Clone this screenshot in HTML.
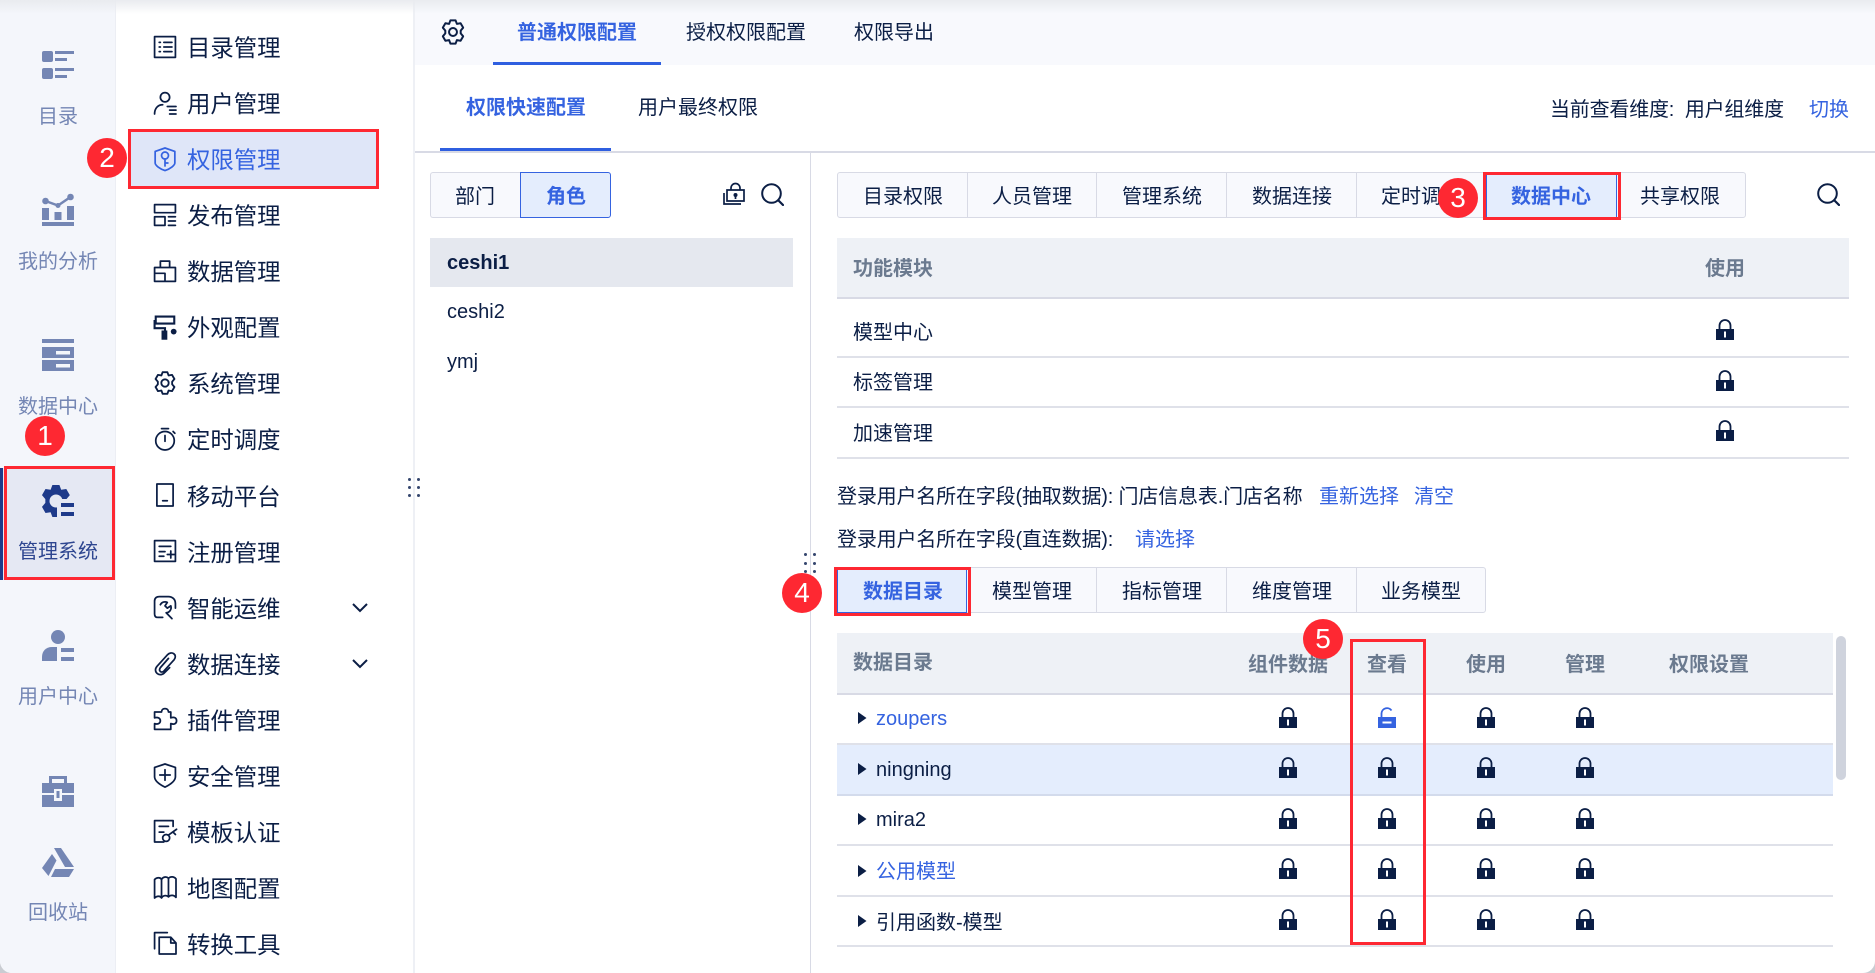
<!DOCTYPE html>
<html lang="zh"><head><meta charset="utf-8"><title>权限管理</title>
<style>
html,body{margin:0;padding:0;width:1875px;height:973px;overflow:hidden;background:#c9ccd2}
#app{position:relative;width:1875px;height:973px;overflow:hidden;background:#fff;border-radius:0 0 12px 12px;font-family:"Liberation Sans","Noto Sans CJK SC",sans-serif;font-size:20px;color:#0b1e45}
.a{position:absolute;box-sizing:border-box}
.t{position:absolute;white-space:nowrap;line-height:30px;height:30px;margin-top:1px}
.c{transform:translateX(-50%)}
.b{font-weight:700}
.bl{color:#3563e0}
.g{color:#6b7a8f;font-weight:700}
.r{color:#7486b4}
.m{font-size:23.4px;left:187px;line-height:36px;height:36px}
.red{position:absolute;box-sizing:border-box;border:3px solid #fe2832}
.n{position:absolute;width:40px;height:40px;border-radius:50%;background:#fe2832;color:#fff;font-size:28px;line-height:40px;text-align:center}
.ln{position:absolute;height:2px;background:#dfe1e9}
svg{position:absolute;overflow:visible}
.ic{fill:none;stroke:#0b1e45;stroke-width:1.5;stroke-linejoin:round;stroke-linecap:round}
.d{position:absolute;width:3px;height:3px;border-radius:50%;background:#34466e}
</style></head><body><div id="app">
<svg width="0" height="0" style="position:absolute">
<defs>
<symbol id="lock" viewBox="0 0 18 21"><path d="M3.500 11V6.500a5.500 5.500 0 0 1 11 0V11" fill="none" stroke="#0b1e45" stroke-width="1.800"/><rect x="0" y="10" width="18" height="11" fill="#0b1e45"/><rect x="8" y="12.500" width="2" height="6" fill="#fff"/></symbol>
<symbol id="search" viewBox="0 0 23 23"><circle cx="10.500" cy="10.500" r="9.300" fill="none" stroke="#0b1e45" stroke-width="2"/><path d="M17.500 17.500l4.500 4.500" stroke="#0b1e45" stroke-width="2.200" stroke-linecap="round"/></symbol>
<symbol id="gear" viewBox="0 0 24 24"><path d="M9.800 2h4.400l1.100 3 3.200-.5 2.200 3.800-2.100 2.500v2.400l2.100 2.500-2.200 3.800-3.200-.5-1.100 3H9.800l-1.100-3-3.200.5-2.200-3.800 2.100-2.500v-2.400L3.300 8.300l2.200-3.800 3.200.5z" fill="none" stroke="#0b1e45" stroke-width="1.700" stroke-linejoin="round"/><circle cx="12" cy="12" r="3.400" fill="none" stroke="#0b1e45" stroke-width="1.700"/></symbol>
</defs>
</svg>

<!-- left rail -->
<div class="a" style="left:0;top:0;width:116px;height:973px;background:#f4f6fb;border-right:1px solid #eceef4"></div>
<div class="a" style="left:0;top:468px;width:3px;height:112px;background:#1e3a8a"></div>
<div class="a" style="left:3px;top:468px;width:112px;height:112px;background:#e5e8f3"></div>

<svg style="left:42px;top:51px" width="32" height="28"><g fill="#7486b4"><rect width="11" height="11" rx="2"/><rect x="13" width="19" height="3"/><rect x="13" y="7" width="12" height="3"/><rect y="17" width="11" height="11" rx="2"/><rect x="13" y="17" width="19" height="3"/><rect x="13" y="24" width="12" height="3"/></g></svg>
<svg style="left:42px;top:194px" width="32" height="32"><g fill="#7486b4"><rect y="14" width="7" height="12"/><rect x="12.500" y="18" width="7" height="8"/><rect x="25" y="12" width="7" height="14"/><rect y="28" width="32" height="4"/><path d="M3.500 7L16 11.500 28.500 3" fill="none" stroke="#7486b4" stroke-width="2.500"/><circle cx="3.500" cy="7" r="3.300"/><circle cx="16" cy="11.500" r="2.500"/><circle cx="28.500" cy="3" r="3.300"/></g></svg>
<svg style="left:42px;top:339px" width="32" height="32"><g fill="#7486b4"><rect width="32" height="4"/><rect y="8" width="32" height="11"/><rect y="21" width="32" height="11"/></g><rect x="14" y="12" width="14" height="3.500" fill="#f4f6fb"/><rect x="14" y="25" width="14" height="3.500" fill="#f4f6fb"/></svg>
<svg style="left:42px;top:485px" width="32" height="32" viewBox="0 0 32 32"><path transform="translate(-5.300 -3.200) scale(1.600)" d="M9.800 2h4.400l1.100 3 3.200-.5 2.200 3.800-2.100 2.500v2.400l2.100 2.500-2.200 3.800-3.200-.5-1.100 3H9.800l-1.100-3-3.200.5-2.200-3.800 2.100-2.500v-2.400L3.300 8.300l2.200-3.800 3.200.5z" fill="#1e3a8a"/><circle cx="14" cy="16" r="6.500" fill="#e5e8f3"/><rect x="15" y="14" width="17" height="18" fill="#e5e8f3"/><rect x="19" y="18" width="13" height="4" fill="#1e3a8a"/><rect x="19" y="27" width="13" height="4" fill="#1e3a8a"/></svg>
<svg style="left:42px;top:630px" width="32" height="32"><g fill="#7486b4"><circle cx="16" cy="7" r="7"/><path d="M0 31v-4c0-6 4-10 10-10h5v14z"/><rect x="19" y="18" width="13" height="4"/><rect x="19" y="27" width="13" height="4"/></g></svg>
<svg style="left:42px;top:775px" width="32" height="32"><g fill="#7486b4"><path d="M7 9V1h18v8h-3V4H10v5z"/><rect y="8" width="32" height="10"/><rect y="20" width="32" height="12"/></g><rect x="12" y="14" width="8" height="12" fill="#f4f6fb"/><rect x="14.500" y="16" width="3" height="7" fill="#7486b4"/></svg>
<svg style="left:42px;top:848px" width="32" height="30"><g fill="#7486b4"><path d="M12 0h7l13 19h-9z"/><path d="M10 6l4.500 6.500L6.500 28 0 20z"/><path d="M13 21h19l-5 8H9z"/></g></svg>

<div class="t c r" style="left:58px;top:101px">目录</div>
<div class="t c r" style="left:58px;top:246px">我的分析</div>
<div class="t c r" style="left:58px;top:391px">数据中心</div>
<div class="t c" style="left:58px;top:536px;color:#2e4690">管理系统</div>
<div class="t c r" style="left:58px;top:681px">用户中心</div>
<div class="t c r" style="left:58px;top:897px">回收站</div>

<!-- menu -->
<div class="a" style="left:413px;top:0;width:2px;height:973px;background:#eef0f5"></div>
<div class="a" style="left:131px;top:132px;width:245px;height:54px;background:#dfe6f8"></div>

<svg class="ic" viewBox="1.500 1.500 19 19" style="left:154px;top:36px" width="22" height="22"><rect x="2" y="2" width="18" height="18"/><path d="M6 7h1M10 7h7M6 11h1M10 11h7M6 15h1M10 15h7"/></svg>
<svg class="ic" viewBox="1.500 1.500 19 19" style="left:154px;top:92px" width="22" height="22"><circle cx="11" cy="6" r="4"/><path d="M2 20.500c0-5 3-8 7-8M13 14h7.500M15 17.200h5.500M15 20.500h5.500"/></svg>
<svg class="ic" viewBox="1.500 1.500 19 19" style="left:154px;top:148px;stroke:#3563e0" width="22" height="22"><path d="M11 1.500l8.500 3v10c0 2-4 5-8.500 6.500-4.500-1.500-8.500-4.500-8.500-6.500v-10z"/><circle cx="11" cy="8" r="3"/><path d="M11 11v6M11 14.500h2.500"/></svg>
<svg class="ic" viewBox="1.500 1.500 19 19" style="left:154px;top:204px" width="22" height="22"><path d="M2 2h18v7H2zM2 12.500h9V20H2zM14 12.500h6M14 16.200h6M14 20h6"/></svg>
<svg class="ic" viewBox="1.500 1.500 19 19" style="left:154px;top:260px" width="22" height="22"><path d="M2 8h18v12H2zM7 8V2.500h8V8M2 13h9M11 13v7"/></svg>
<svg viewBox="1.500 1.500 19 19" style="left:154px;top:316px" width="22" height="22"><path d="M3 2h16v6H3zM2 5v7h9v3" fill="none" stroke="#0b1e45" stroke-width="1.800"/><rect x="8" y="14" width="5" height="8" fill="#0b1e45"/><circle cx="18.500" cy="15" r="2.500" fill="#0b1e45"/></svg>
<svg style="left:152px;top:370px" width="26" height="26" viewBox="0 0 24 24"><use href="#gear"/></svg>
<svg class="ic" viewBox="1.500 1.500 19 19" style="left:154px;top:428px" width="22" height="22"><circle cx="11" cy="12.500" r="8"/><path d="M11 8v5M8 2h6M18 4.500l1.500 1.500"/></svg>
<svg class="ic" viewBox="1.500 1.500 19 19" style="left:154px;top:484px" width="22" height="22"><rect x="4" y="1.500" width="14" height="19"/><path d="M9 16h4"/></svg>
<svg class="ic" viewBox="1.500 1.500 19 19" style="left:154px;top:540px" width="22" height="22"><rect x="2" y="2" width="18" height="18"/><path d="M6 7h10M6 11.500h5M6 15.500h4M13 14h6M16 11v6"/></svg>
<svg class="ic" viewBox="1.500 1.500 19 19" style="left:154px;top:596px" width="22" height="22"><path d="M9 20H5c-2 0-3-1-3-3V6c0-3 2-4 4-4h8c3 0 6 2 6 6v4"/><path d="M7 9a4.500 4.500 0 0 1 6-2l-2 3 2 2 3-2a4.500 4.500 0 0 1-4 6l5 5"/></svg>
<svg class="ic" viewBox="1.500 1.500 19 19" style="left:154px;top:652px" width="22" height="22"><path d="M14 7L7 15c-2 3 1 5 3 3L19 8c3-4-2-8-6-4L4 14c-4 5 3 10 7 5l4-4"/></svg>
<svg class="ic" viewBox="1.500 1.500 19 19" style="left:154px;top:708px" width="22" height="22"><path d="M8 5c0-4 6-4 6 0h2v5c3-1 5 0 5 2.500S19 16 16 15v5H2v-5c3 1 5-.5 5-2.500S5 9 2 10V5z"/></svg>
<svg class="ic" viewBox="1.500 1.500 19 19" style="left:154px;top:764px" width="22" height="22"><path d="M11 1.500l9 3v8c0 4-5 7-9 9-4-2-9-5-9-9v-8z"/><path d="M6.500 11h9M11 6.500v9"/></svg>
<svg class="ic" viewBox="1.500 1.500 19 19" style="left:154px;top:820px" width="22" height="22"><path d="M10 20.500H2V2h16v5M6 7h8M6 12h4"/><circle cx="12" cy="17" r="3"/><path d="M14 14.500l7-5M18 12l2 2"/></svg>
<svg class="ic" viewBox="1.500 1.500 19 19" style="left:154px;top:876px" width="22" height="22"><path d="M2 4.500c2-2 5-2 6 0v16c-1-2-4-2-6 0zM8 4.500c1-2 4-3 6-1v16c-2-2-5-1-6 1zM14 3.500c2-2 5-1.500 6.500.5v16c-1.500-2-4.500-2.500-6.500-.5z"/></svg>
<svg class="ic" viewBox="1.500 1.500 19 19" style="left:154px;top:932px" width="22" height="22"><path d="M2 16V2h11M6 20.500V6h10l4.500 5v9.500zM16 6v5h4.500"/></svg>

<div class="t m" style="top:29px">目录管理</div>
<div class="t m" style="top:85px">用户管理</div>
<div class="t m bl" style="top:141px">权限管理</div>
<div class="t m" style="top:197px">发布管理</div>
<div class="t m" style="top:253px">数据管理</div>
<div class="t m" style="top:309px">外观配置</div>
<div class="t m" style="top:365px">系统管理</div>
<div class="t m" style="top:421px">定时调度</div>
<div class="t m" style="top:478px">移动平台</div>
<div class="t m" style="top:534px">注册管理</div>
<div class="t m" style="top:590px">智能运维</div>
<div class="t m" style="top:646px">数据连接</div>
<div class="t m" style="top:702px">插件管理</div>
<div class="t m" style="top:758px">安全管理</div>
<div class="t m" style="top:814px">模板认证</div>
<div class="t m" style="top:870px">地图配置</div>
<div class="t m" style="top:926px">转换工具</div>
<svg style="left:351px;top:602px" width="18" height="12"><path d="M2 2l7 7 7-7" fill="none" stroke="#0b1e45" stroke-width="2"/></svg>
<svg style="left:351px;top:658px" width="18" height="12"><path d="M2 2l7 7 7-7" fill="none" stroke="#0b1e45" stroke-width="2"/></svg>

<i class="d" style="left:408px;top:478px"></i><i class="d" style="left:417px;top:478px"></i>
<i class="d" style="left:408px;top:486px"></i><i class="d" style="left:417px;top:486px"></i>
<i class="d" style="left:408px;top:494px"></i><i class="d" style="left:417px;top:494px"></i>

<!-- top bar -->
<div class="a" style="left:415px;top:0;width:1460px;height:65px;background:#f8f9fd"></div>
<svg style="left:439px;top:18px" width="28" height="28" viewBox="0 0 24 24"><use href="#gear"/></svg>
<div class="t b bl" style="left:517px;top:17px">普通权限配置</div>
<div class="a" style="left:493px;top:62px;width:168px;height:3px;background:#2f5fe0"></div>
<div class="t" style="left:686px;top:17px">授权权限配置</div>
<div class="t" style="left:854px;top:17px">权限导出</div>
<div class="a" style="left:0;top:0;width:1875px;height:14px;background:linear-gradient(#e9ebef,rgba(233,235,239,0))"></div>

<!-- second row -->
<div class="t b bl" style="left:466px;top:92px">权限快速配置</div>
<div class="t" style="left:638px;top:92px">用户最终权限</div>
<div class="a" style="left:440px;top:148px;width:171px;height:3px;background:#2f5fe0"></div>
<div class="a" style="left:415px;top:151px;width:1460px;height:2px;background:#d8dae5"></div>
<div class="t" style="left:1550px;top:94px;letter-spacing:-.2px">当前查看维度:&nbsp; 用户组维度</div>
<div class="t bl" style="left:1809px;top:94px">切换</div>

<!-- left panel -->
<div class="a" style="left:810px;top:153px;width:1px;height:820px;background:#d8dae5"></div>
<div class="a" style="left:430px;top:172px;width:91px;height:46px;background:#f8f9fd;border:1px solid #d8dae5;border-right:0;border-radius:3px 0 0 3px"></div>
<div class="a" style="left:520px;top:172px;width:91px;height:46px;background:#e4edfd;border:1px solid #3563e0;border-radius:0 3px 3px 0"></div>
<div class="t c" style="left:475px;top:181px">部门</div>
<div class="t c b bl" style="left:566px;top:181px">角色</div>
<svg style="left:723px;top:183px" width="21" height="22"><path d="M1 10v11h17M4 18V7h17v11zM8 7V5a4.500 4.500 0 0 1 9 0v2" fill="none" stroke="#0b1e45" stroke-width="1.700"/><circle cx="12.500" cy="12" r="2" fill="#0b1e45"/><path d="M12.500 12v4" stroke="#0b1e45" stroke-width="1.700"/></svg>
<svg style="left:761px;top:183px" width="23" height="23" viewBox="0 0 23 23"><use href="#search"/></svg>
<div class="a" style="left:430px;top:238px;width:363px;height:49px;background:#e5e8ef"></div>
<div class="t b" style="left:447px;top:247px">ceshi1</div>
<div class="t" style="left:447px;top:296px">ceshi2</div>
<div class="t" style="left:447px;top:346px">ymj</div>

<!-- right tabs -->
<div class="a" style="left:837px;top:172px;width:909px;height:46px;background:#f8f9fd;border:1px solid #d8dae5;border-radius:3px"></div>
<div class="a" style="left:967px;top:172px;width:1px;height:46px;background:#d8dae5"></div>
<div class="a" style="left:1096px;top:172px;width:1px;height:46px;background:#d8dae5"></div>
<div class="a" style="left:1226px;top:172px;width:1px;height:46px;background:#d8dae5"></div>
<div class="a" style="left:1356px;top:172px;width:1px;height:46px;background:#d8dae5"></div>
<div class="a" style="left:1486px;top:172px;width:131px;height:46px;background:#e4edfd;border:1px solid #3563e0"></div>
<div class="t c" style="left:903px;top:181px">目录权限</div>
<div class="t c" style="left:1032px;top:181px">人员管理</div>
<div class="t c" style="left:1162px;top:181px">管理系统</div>
<div class="t c" style="left:1292px;top:181px">数据连接</div>
<div class="t c" style="left:1421px;top:181px">定时调度</div>
<div class="t c b bl" style="left:1551px;top:181px">数据中心</div>
<div class="t c" style="left:1680px;top:181px">共享权限</div>
<svg style="left:1817px;top:183px" width="23" height="23" viewBox="0 0 23 23"><use href="#search"/></svg>

<!-- table 1 -->
<div class="a" style="left:837px;top:238px;width:1012px;height:59px;background:#eef1f6"></div>
<div class="ln" style="left:837px;top:297px;width:1012px;background:#d8dae5"></div>
<div class="t g" style="left:853px;top:253px">功能模块</div>
<div class="t c g" style="left:1725px;top:253px">使用</div>
<div class="ln" style="left:837px;top:356px;width:1012px"></div>
<div class="ln" style="left:837px;top:406px;width:1012px"></div>
<div class="ln" style="left:837px;top:457px;width:1012px"></div>
<div class="t" style="left:853px;top:317px">模型中心</div>
<div class="t" style="left:853px;top:367px">标签管理</div>
<div class="t" style="left:853px;top:418px">加速管理</div>
<svg style="left:1716px;top:319px" width="18" height="21"><use href="#lock"/></svg>
<svg style="left:1716px;top:370px" width="18" height="21"><use href="#lock"/></svg>
<svg style="left:1716px;top:420px" width="18" height="21"><use href="#lock"/></svg>

<!-- fields -->
<div class="t" style="left:837px;top:481px;letter-spacing:-.17px">登录用户名所在字段(抽取数据): 门店信息表.门店名称</div>
<div class="t bl" style="left:1319px;top:481px">重新选择</div>
<div class="t bl" style="left:1414px;top:481px">清空</div>
<div class="t" style="left:837px;top:524px;letter-spacing:-.17px">登录用户名所在字段(直连数据):</div>
<div class="t bl" style="left:1135px;top:524px">请选择</div>
<i class="d" style="left:804px;top:553px"></i><i class="d" style="left:813px;top:553px"></i>
<i class="d" style="left:804px;top:562px"></i><i class="d" style="left:813px;top:562px"></i>
<i class="d" style="left:804px;top:570px"></i><i class="d" style="left:813px;top:570px"></i>

<!-- sub tabs -->
<div class="a" style="left:837px;top:567px;width:649px;height:46px;background:#f8f9fd;border:1px solid #d8dae5;border-radius:3px"></div>
<div class="a" style="left:1096px;top:567px;width:1px;height:46px;background:#d8dae5"></div>
<div class="a" style="left:1226px;top:567px;width:1px;height:46px;background:#d8dae5"></div>
<div class="a" style="left:1356px;top:567px;width:1px;height:46px;background:#d8dae5"></div>
<div class="a" style="left:837px;top:567px;width:130px;height:46px;background:#e4edfd;border:1px solid #3563e0"></div>
<div class="t c b bl" style="left:903px;top:576px">数据目录</div>
<div class="t c" style="left:1032px;top:576px">模型管理</div>
<div class="t c" style="left:1162px;top:576px">指标管理</div>
<div class="t c" style="left:1292px;top:576px">维度管理</div>
<div class="t c" style="left:1421px;top:576px">业务模型</div>

<!-- table 2 -->
<div class="a" style="left:837px;top:633px;width:996px;height:60px;background:#eef1f6"></div>
<div class="ln" style="left:837px;top:693px;width:996px;background:#d8dae5"></div>
<div class="t g" style="left:853px;top:647px">数据目录</div>
<div class="t c g" style="left:1288px;top:649px">组件数据</div>
<div class="t c g" style="left:1387px;top:649px">查看</div>
<div class="t c g" style="left:1486px;top:649px">使用</div>
<div class="t c g" style="left:1585px;top:649px">管理</div>
<div class="t g" style="left:1669px;top:649px">权限设置</div>
<div class="a" style="left:837px;top:743px;width:996px;height:51px;background:#e4edfd"></div>
<div class="ln" style="left:837px;top:743px;width:996px"></div>
<div class="ln" style="left:837px;top:794px;width:996px;background:#d3dbec"></div>
<div class="ln" style="left:837px;top:844px;width:996px"></div>
<div class="ln" style="left:837px;top:895px;width:996px"></div>
<div class="ln" style="left:837px;top:945px;width:996px"></div>
<svg style="left:858px;top:712px" width="9" height="12"><path d="M0 0l8.500 6L0 12z" fill="#0b1e45"/></svg>
<svg style="left:858px;top:763px" width="9" height="12"><path d="M0 0l8.500 6L0 12z" fill="#0b1e45"/></svg>
<svg style="left:858px;top:813px" width="9" height="12"><path d="M0 0l8.500 6L0 12z" fill="#0b1e45"/></svg>
<svg style="left:858px;top:865px" width="9" height="12"><path d="M0 0l8.500 6L0 12z" fill="#0b1e45"/></svg>
<svg style="left:858px;top:915px" width="9" height="12"><path d="M0 0l8.500 6L0 12z" fill="#0b1e45"/></svg>
<div class="t bl" style="left:876px;top:703px">zoupers</div>
<div class="t" style="left:876px;top:754px">ningning</div>
<div class="t" style="left:876px;top:804px">mira2</div>
<div class="t bl" style="left:876px;top:856px">公用模型</div>
<div class="t" style="left:876px;top:907px">引用函数-模型</div>

<svg style="left:1279px;top:707px" width="18" height="21"><use href="#lock"/></svg>
<svg style="left:1279px;top:757px" width="18" height="21"><use href="#lock"/></svg>
<svg style="left:1279px;top:808px" width="18" height="21"><use href="#lock"/></svg>
<svg style="left:1279px;top:858px" width="18" height="21"><use href="#lock"/></svg>
<svg style="left:1279px;top:909px" width="18" height="21"><use href="#lock"/></svg>

<svg style="left:1378px;top:707px" width="18" height="21"><path d="M3.500 11V6.500a5.500 5.500 0 0 1 10-3" fill="none" stroke="#3563e0" stroke-width="1.800"/><rect y="10" width="18" height="11" fill="#3563e0"/><rect x="4.500" y="14.500" width="9" height="2" fill="#fff"/></svg>
<svg style="left:1378px;top:757px" width="18" height="21"><use href="#lock"/></svg>
<svg style="left:1378px;top:808px" width="18" height="21"><use href="#lock"/></svg>
<svg style="left:1378px;top:858px" width="18" height="21"><use href="#lock"/></svg>
<svg style="left:1378px;top:909px" width="18" height="21"><use href="#lock"/></svg>

<svg style="left:1477px;top:707px" width="18" height="21"><use href="#lock"/></svg>
<svg style="left:1477px;top:757px" width="18" height="21"><use href="#lock"/></svg>
<svg style="left:1477px;top:808px" width="18" height="21"><use href="#lock"/></svg>
<svg style="left:1477px;top:858px" width="18" height="21"><use href="#lock"/></svg>
<svg style="left:1477px;top:909px" width="18" height="21"><use href="#lock"/></svg>

<svg style="left:1576px;top:707px" width="18" height="21"><use href="#lock"/></svg>
<svg style="left:1576px;top:757px" width="18" height="21"><use href="#lock"/></svg>
<svg style="left:1576px;top:808px" width="18" height="21"><use href="#lock"/></svg>
<svg style="left:1576px;top:858px" width="18" height="21"><use href="#lock"/></svg>
<svg style="left:1576px;top:909px" width="18" height="21"><use href="#lock"/></svg>

<div class="a" style="left:1836px;top:636px;width:10px;height:144px;border-radius:5px;background:#cfd3dd"></div>

<!-- annotations -->
<div class="red" style="left:4px;top:466px;width:111px;height:114px"></div>
<div class="red" style="left:128px;top:129px;width:251px;height:60px"></div>
<div class="red" style="left:1483px;top:172px;width:138px;height:48px"></div>
<div class="red" style="left:834px;top:567px;width:137px;height:49px"></div>
<div class="red" style="left:1350px;top:639px;width:76px;height:306px"></div>
<div class="n" style="left:25px;top:416px">1</div>
<div class="n" style="left:87px;top:138px">2</div>
<div class="n" style="left:1438px;top:178px">3</div>
<div class="n" style="left:782px;top:573px">4</div>
<div class="n" style="left:1303px;top:619px">5</div>
</div></body></html>
